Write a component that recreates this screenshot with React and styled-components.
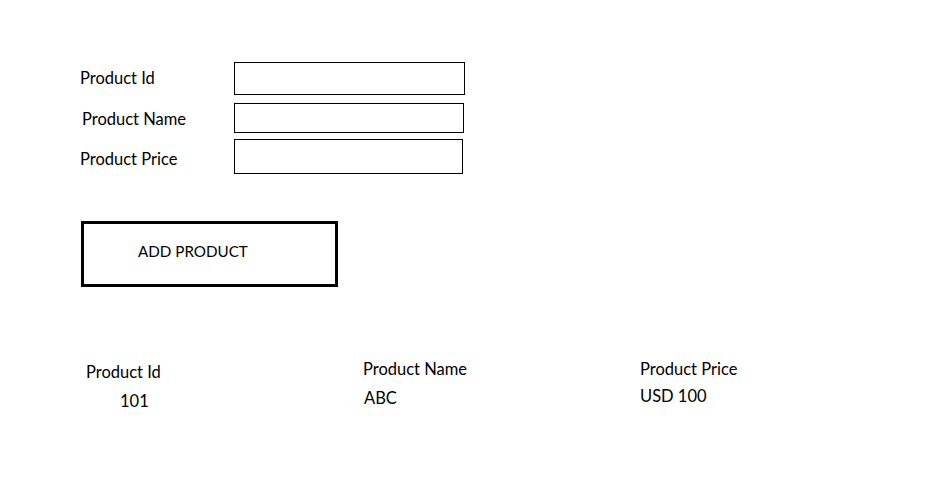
import React from 'react';
import styled, { createGlobalStyle } from 'styled-components';

const GlobalStyle = createGlobalStyle`
  body {
    margin: 0;
    background: #ffffff;
    font-family: Lato, "Open Sans", sans-serif;
    color: #000;
  }
`;

const Page = styled.div`
  width: 925px;
  height: 488px;
  padding: 62px 0 0 80px;
  box-sizing: border-box;
`;

const Form = styled.div`
  display: flex;
  flex-direction: column;
`;

const FieldRow = styled.div`
  display: grid;
  grid-template-columns: 154px auto;
  align-items: center;
  margin-bottom: ${(p) => p.$gap}px;
`;

const Label = styled.label`
  font-size: 16.5px;
  line-height: 20px;
  padding-left: ${(p) => p.$indent || 0}px;
  margin-top: ${(p) => p.$shift || 0}px;
`;

const Input = styled.input`
  width: ${(p) => p.$w}px;
  height: ${(p) => p.$h}px;
  box-sizing: border-box;
  border: 1px solid #000;
  border-radius: 0;
  padding: 0 6px;
  outline: none;
  font: inherit;
`;

const AddButton = styled.button`
  margin: 47px 0 0 1px;
  width: 257px;
  height: 66px;
  box-sizing: border-box;
  border: 3px solid #000;
  background: #fff;
  padding: 0 0 6px 54px;
  text-align: left;
  font-family: inherit;
  font-size: 15.2px;
  color: #000;
  cursor: pointer;
`;

const Table = styled.div`
  display: grid;
  grid-template-columns: 277px 277px 277px;
  margin: 72px 0 0 6px;
`;

const Column = styled.div`
  display: flex;
  flex-direction: column;
  padding-top: ${(p) => p.$top}px;
  font-size: 16.5px;
`;

const Head = styled.div`
  line-height: 20px;
`;

const Cell = styled.div`
  line-height: 20px;
  margin-top: ${(p) => p.$gap}px;
  padding-left: ${(p) => p.$indent || 0}px;
`;

const columns = [
  { title: 'Product Id', value: '101', top: 3, gap: 9, indent: 34 },
  { title: 'Product Name', value: 'ABC', top: 0, gap: 9, indent: 1 },
  { title: 'Product Price', value: 'USD 100', top: 0, gap: 7, indent: 0 },
];

export default function App() {
  return (
    <>
      <GlobalStyle />
      <Page>
        <Form>
          <FieldRow $gap={8}>
            <Label $shift={-1}>Product Id</Label>
            <Input $w={231} $h={33} />
          </FieldRow>
          <FieldRow $gap={6}>
            <Label $indent={2} $shift={2}>Product Name</Label>
            <Input $w={230} $h={30} />
          </FieldRow>
          <FieldRow $gap={0}>
            <Label $shift={5}>Product Price</Label>
            <Input $w={229} $h={35} />
          </FieldRow>
        </Form>
        <AddButton>ADD PRODUCT</AddButton>
        <Table>
          {columns.map((c) => (
            <Column key={c.title} $top={c.top}>
              <Head>{c.title}</Head>
              <Cell $gap={c.gap} $indent={c.indent}>{c.value}</Cell>
            </Column>
          ))}
        </Table>
      </Page>
    </>
  );
}
